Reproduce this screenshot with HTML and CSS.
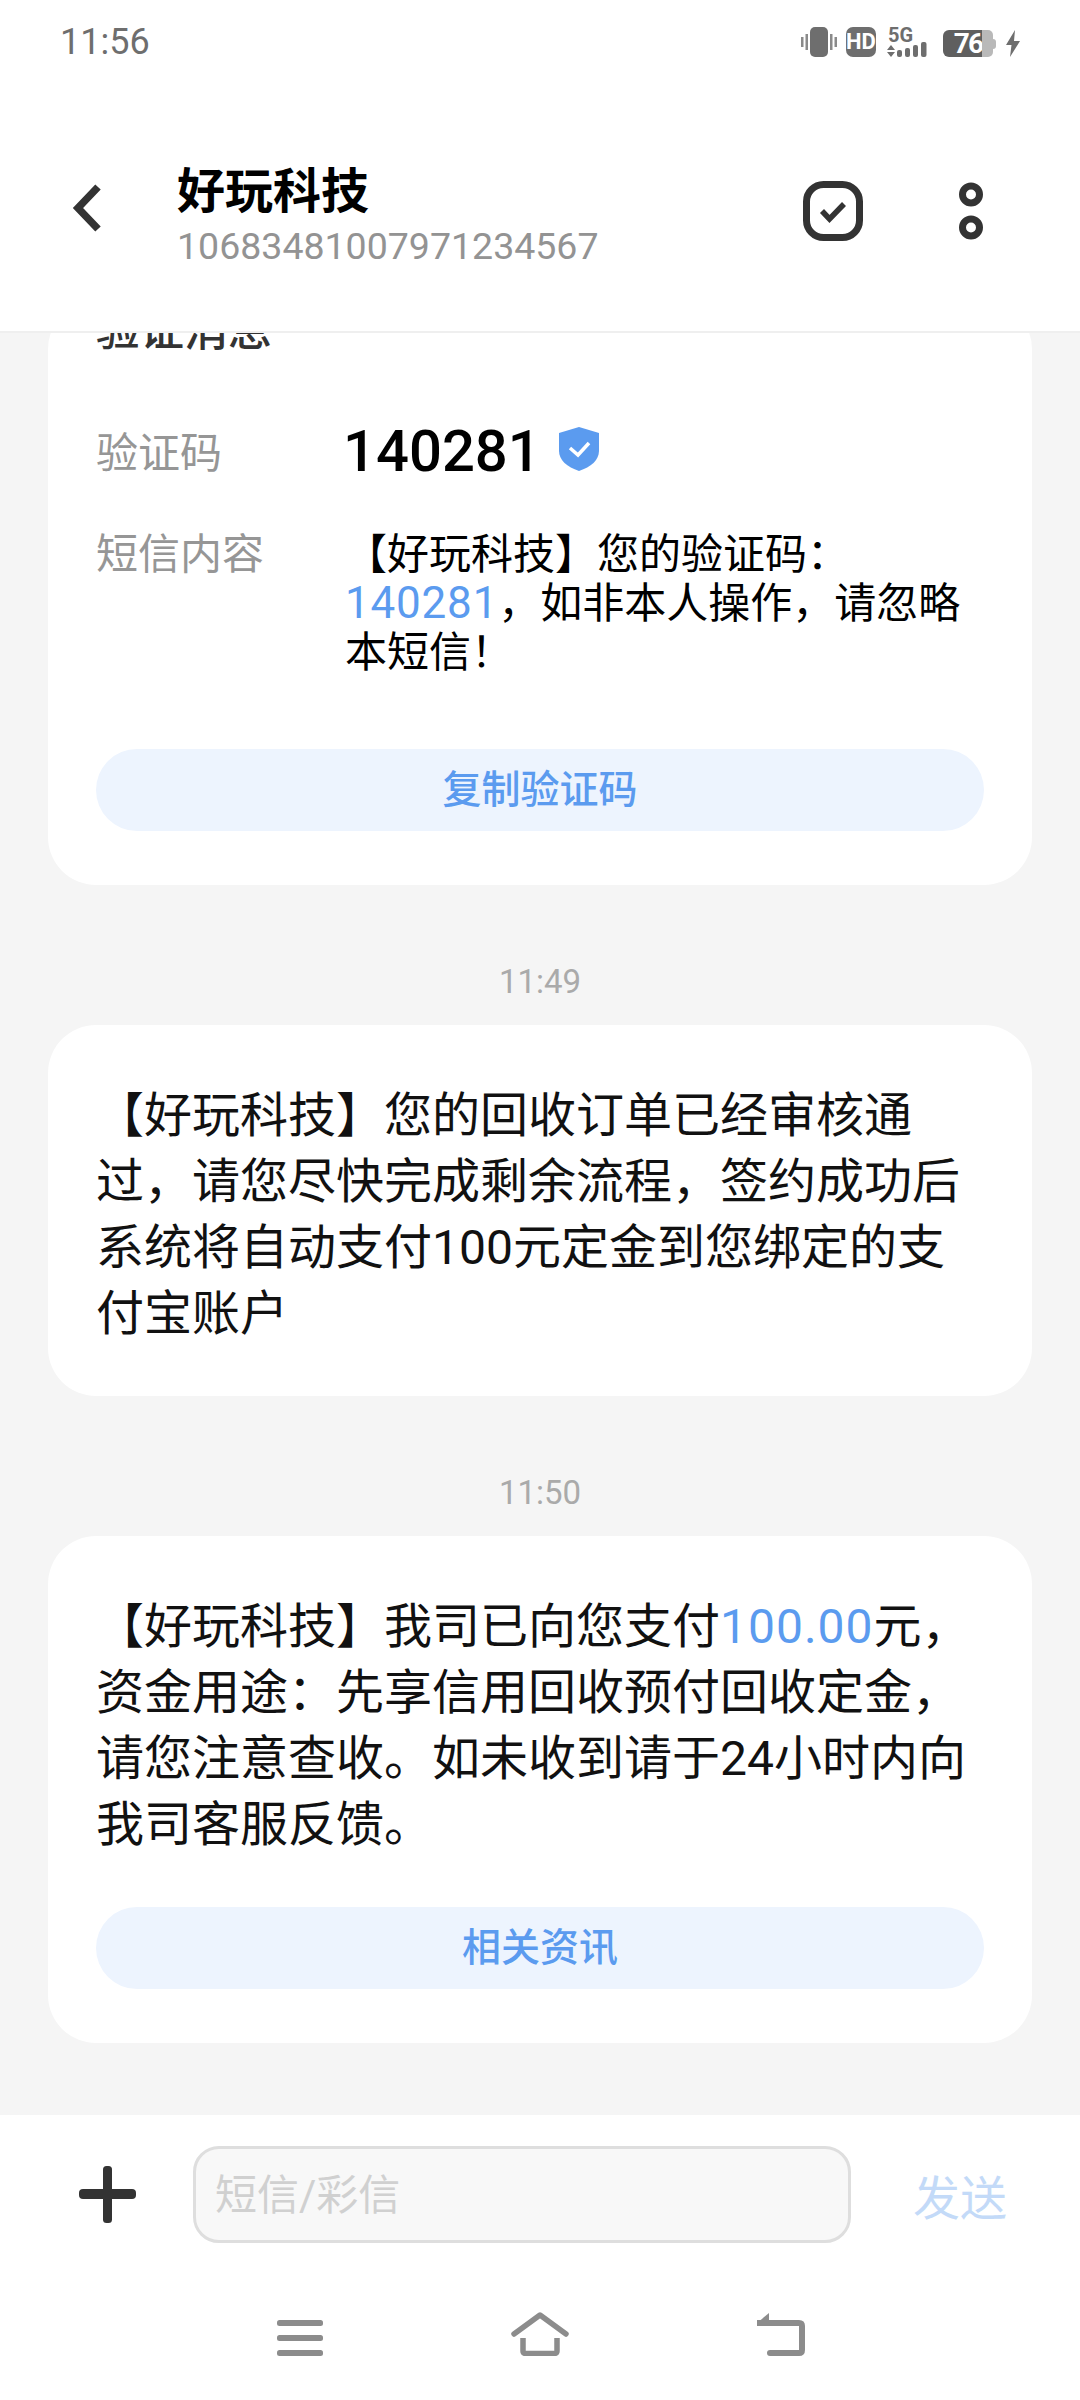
FILE: index.html
```html
<!DOCTYPE html>
<html lang="zh-CN">

<head>
    <meta charset="UTF-8">
    <title>好玩科技</title>
    <link rel="stylesheet" href="styles.css">
</head>

<body>
    <div class="page">
        <header class="top">
            <div class="status">
                <span class="clock">11:56</span>
                <div class="status-icons">
                    <svg class="ic-vibrate" viewBox="0 0 36 30">
                        <rect x="9" y="0" width="18" height="30" rx="5" fill="#6e6e6e" />
                        <rect x="0" y="10" width="2.500" height="10" fill="#8a8a8a" />
                        <rect x="4.500" y="7" width="2.500" height="16" fill="#8a8a8a" />
                        <rect x="29" y="7" width="2.500" height="16" fill="#8a8a8a" />
                        <rect x="33.500" y="10" width="2.500" height="10" fill="#8a8a8a" />
                    </svg>
                    <span class="hd">HD</span>
                    <svg class="ic-signal" viewBox="0 0 46 30">
                        <text x="1" y="15" class="sig-text">5G</text>
                        <path d="M4 18l4 5H0zM0 25h8l-4 5z" fill="#6e6e6e" />
                        <rect x="10" y="23" width="5" height="7" rx="2" fill="#6e6e6e" />
                        <rect x="18" y="21" width="5" height="9" rx="2" fill="#6e6e6e" />
                        <rect x="26" y="18" width="5" height="12" rx="2" fill="#6e6e6e" />
                        <rect x="34" y="15" width="5.500" height="15" rx="2" fill="#6e6e6e" />
                    </svg>
                    <div class="battery">
                        <span class="battery-level">76</span>
                        <span class="battery-rest"></span>
                        <span class="battery-nub"></span>
                    </div>
                    <svg class="ic-bolt" viewBox="0 0 14 27">
                        <path d="M9 0L0 15h5.500L4 27l10-16H8z" fill="#6e6e6e" />
                    </svg>
                </div>
            </div>
            <div class="toolbar">
                <svg class="ic-back" viewBox="0 0 30 48">
                    <path d="M26 3L6 24l20 21" fill="none" stroke="#333" stroke-width="7.500" />
                </svg>
                <div class="contact">
                    <div class="contact-name">好玩科技</div>
                    <div class="contact-num">10683481007971234567</div>
                </div>
                <svg class="ic-check" viewBox="0 0 60 60">
                    <rect x="3.500" y="3.500" width="53" height="53" rx="17" fill="none" stroke="#333" stroke-width="7" />
                    <path d="M19 30l7.500 8L41 23" fill="none" stroke="#333" stroke-width="5.500" />
                </svg>
                <svg class="ic-more" viewBox="0 0 24 58">
                    <circle cx="12" cy="12.500" r="8.500" fill="none" stroke="#333" stroke-width="7" />
                    <circle cx="12" cy="45.500" r="8.500" fill="none" stroke="#333" stroke-width="7" />
                </svg>
            </div>
        </header>

        <main class="list">
            <section class="card">
                <div class="card-title">验证消息</div>
                <div class="row row-code">
                    <div class="row-label">验证码</div>
                    <div class="code">140281</div>
                    <svg class="ic-shield" viewBox="0 0 40 44">
                        <path d="M20 0l20 6v18c0 9-8 16-20 20C8 40 0 33 0 24V6z" fill="#5b9bef" />
                        <path d="M11 21l8 7 11-12" fill="none" stroke="#fff" stroke-width="3.500" />
                    </svg>
                </div>
                <div class="row row-body">
                    <div class="row-label">短信内容</div>
                    <div class="row-text">【好玩科技】您的验证码：<span class="hl hl-small">140281</span>，如非本人操作，请忽略本短信！</div>
                </div>
                <div class="btn btn-first">复制验证码</div>
            </section>

            <div class="time">11:49</div>
            <section class="card card-msg">
                <p class="msg">【好玩科技】您的回收订单已经审核通过，请您尽快完成剩余流程，签约成功后系统将自动支付100元定金到您绑定的支付宝账户</p>
            </section>

            <div class="time">11:50</div>
            <section class="card card-msg">
                <p class="msg">【好玩科技】我司已向您支付<span class="hl hl-wide">100.00</span>元，资金用途：先享信用回收预付回收定金，请您注意查收。如未收到请于24小时内向我司客服反馈。</p>
                <div class="btn btn-msg">相关资讯</div>
            </section>
        </main>

        <footer class="bottom">
            <div class="composer">
                <svg class="ic-plus" viewBox="0 0 57 57">
                    <rect x="24" y="0" width="9" height="57" rx="3.500" fill="#333" />
                    <rect x="0" y="23" width="57" height="10" rx="4" fill="#333" />
                </svg>
                <div class="field">短信/彩信</div>
                <div class="send">发送</div>
            </div>
            <nav class="nav">
                <svg class="ic-menu" viewBox="0 0 46 36">
                    <rect x="0" y="0" width="46" height="6" rx="2.500" fill="#8c8c8c" />
                    <rect x="0" y="15" width="46" height="6" rx="2.500" fill="#8c8c8c" />
                    <rect x="0" y="30" width="46" height="6" rx="2.500" fill="#8c8c8c" />
                </svg>
                <svg class="ic-home" viewBox="0 0 58 44">
                    <path d="M3 22L29 3l26 19" fill="none" stroke="#8c8c8c" stroke-width="5.500" stroke-linejoin="round" stroke-linecap="round" />
                    <path d="M12 26v13q0 2.500 3 2.500h28q3 0 3-2.500V26" fill="none" stroke="#8c8c8c" stroke-width="5.500" />
                </svg>
                <svg class="ic-return" viewBox="0 0 48 43">
                    <path d="M1 10h41q3 0 3 3v24q0 3-3 3H13" fill="none" stroke="#8c8c8c" stroke-width="6" stroke-linecap="round" />
                    <path d="M12 0L0 10v3h12z" fill="#8c8c8c" />
                </svg>
            </nav>
        </footer>
    </div>
</body>

</html>
```

FILE: styles.css
```css
* {
    margin: 0;
    padding: 0;
    box-sizing: border-box;
}

body {
    font-family: Roboto, "Noto Sans CJK SC", sans-serif;
    background: #f5f5f5;
    color: #111;
}

svg {
    display: block;
    flex: none;
}

.page {
    display: flex;
    flex-direction: column;
    width: 1080px;
    height: 2400px;
    overflow: hidden;
}

/* top bar */

.top {
    flex: none;
    height: 333px;
    background: #fff;
    border-bottom: 2px solid #efefef;
    position: relative;
    z-index: 1;
}

.status {
    display: flex;
    align-items: center;
    justify-content: space-between;
    height: 84px;
    padding: 0 60px;
}

.clock {
    font-size: 36px;
    color: #6e6e6e;
}

.status-icons {
    display: flex;
    align-items: flex-end;
    height: 30px;
}

.ic-vibrate {
    width: 36px;
    height: 30px;
}

.hd {
    width: 30px;
    height: 30px;
    margin-left: 9px;
    border-radius: 7px;
    background: #6e6e6e;
    color: #fff;
    font-size: 22px;
    font-weight: 700;
    line-height: 30px;
    text-align: center;
}

.ic-signal {
    width: 46px;
    height: 30px;
    margin-left: 11px;
}

.sig-text {
    font-family: Roboto, sans-serif;
    font-size: 20px;
    font-weight: 700;
    fill: #6e6e6e;
}

.battery {
    display: flex;
    align-items: center;
    height: 27px;
    margin-left: 10px;
}

.battery-level {
    width: 39px;
    height: 27px;
    border-radius: 6px 0 0 6px;
    background: #5f5f5f;
    color: #fff;
    font-size: 28px;
    font-weight: 700;
    letter-spacing: -2px;
    line-height: 27px;
    text-align: right;
}

.battery-rest {
    width: 11px;
    height: 27px;
    border-radius: 0 5px 5px 0;
    background: #b9b9b9;
}

.battery-nub {
    width: 3px;
    height: 10px;
    border-radius: 0 3px 3px 0;
    background: #b9b9b9;
}

.ic-bolt {
    width: 14px;
    height: 27px;
    margin-left: 10px;
}

.toolbar {
    display: flex;
    align-items: center;
    height: 247px;
    padding: 6px 97px 0 72px;
}

.ic-back {
    width: 30px;
    height: 48px;
    margin-bottom: 5px;
}

.contact {
    flex: 1;
    margin: 10px 0 0 75px;
}

.contact-name {
    font-size: 48px;
    font-weight: 700;
    line-height: 56px;
    color: #000;
}

.contact-num {
    margin-top: 4px;
    font-size: 37.500px;
    line-height: 44px;
    color: #939393;
}

.ic-check {
    width: 60px;
    height: 60px;
}

.ic-more {
    width: 24px;
    height: 58px;
    margin-left: 96px;
}

/* message list, pinned to the bottom and cut off by the top bar */

.list {
    flex: 1;
    min-height: 0;
    display: flex;
    flex-direction: column;
    justify-content: flex-end;
    overflow: hidden;
    padding: 0 48px 72px;
}

.card {
    flex: none;
    background: #fff;
    border-radius: 48px;
    padding: 0 48px 54px;
}

.card-title {
    font-size: 44px;
    font-weight: 500;
    line-height: 60px;
    color: #333;
}

.row {
    display: flex;
}

.row-code {
    align-items: center;
    margin-top: 60px;
}

.row-code .row-label {
    margin-top: 2px;
}

.row-label {
    flex: none;
    width: 249px;
    font-size: 42px;
    line-height: 49px;
    color: #969696;
}

.code {
    font-size: 58px;
    font-weight: 500;
    line-height: 60px;
    color: #000;
    margin: 0 0 2px -2px;
}

.ic-shield {
    width: 40px;
    height: 44px;
    margin: -6px 0 0 18px;
}

.row-body {
    margin-top: 47px;
    padding-right: 9px;
}

.row-text {
    font-size: 42px;
    line-height: 49px;
    color: #000;
}

.hl {
    color: #5b9bef;
}

.hl-small {
    font-size: 44px;
    letter-spacing: 0.8px;
}

.hl-wide {
    letter-spacing: 1px;
}

.btn {
    height: 82px;
    border-radius: 41px;
    background: #edf4fe;
    color: #5b9bef;
    font-size: 39px;
    font-weight: 500;
    line-height: 82px;
    text-align: center;
}

.btn-first {
    margin-top: 72px;
}

.time {
    flex: none;
    height: 140px;
    padding-top: 75px;
    font-size: 33px;
    line-height: 44px;
    color: #aaa;
    text-align: center;
}

.card-msg {
    padding-top: 58px;
    padding-bottom: 49px;
}

.msg {
    font-size: 48px;
    line-height: 66px;
}

.btn-msg {
    margin: 49px 0 5px;
}

/* composer and navigation */

.bottom {
    flex: none;
    height: 285px;
    background: #fff;
}

.composer {
    display: flex;
    align-items: center;
    height: 97px;
    margin-top: 31px;
    padding-left: 79px;
}

.ic-plus {
    width: 57px;
    height: 57px;
}

.field {
    width: 658px;
    height: 97px;
    margin-left: 57px;
    padding-left: 19px;
    border: 3px solid #dedede;
    border-radius: 26px;
    background: #f8f8f8;
    color: #d0d0d0;
    font-size: 42px;
    line-height: 94px;
}

.send {
    margin-left: 62px;
    font-size: 47px;
    color: #c3daf8;
}

.nav {
    display: grid;
    grid-template-columns: 46px 58px 48px;
    justify-content: center;
    align-items: end;
    column-gap: 188px;
    margin-top: 69px;
    padding-left: 2px;
}

.ic-menu {
    width: 46px;
    height: 36px;
}

.ic-home {
    width: 58px;
    height: 44px;
}

.ic-return {
    width: 48px;
    height: 43px;
}
```
